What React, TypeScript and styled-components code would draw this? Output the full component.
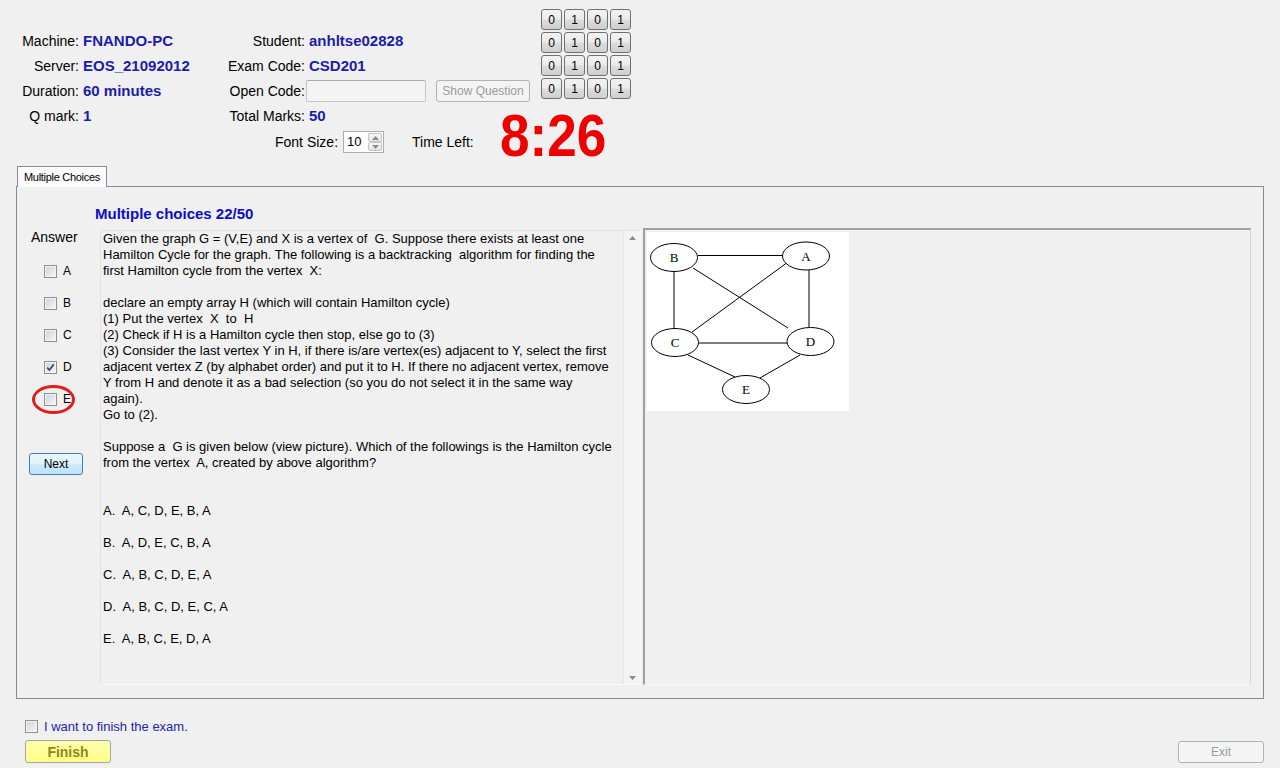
import React from 'react'
import styled, { createGlobalStyle } from 'styled-components'

const GlobalStyle = createGlobalStyle`
  html, body {
    margin: 0;
    padding: 0;
    background: #f0f0f0;
  }
  body {
    font-family: "Liberation Sans", Arial, sans-serif;
    color: #000;
    width: 1280px;
    height: 768px;
    overflow: hidden;
  }
`

const Window = styled.div`
  width: 1280px;
  height: 768px;
  display: flex;
  flex-direction: column;
`

/* ---------- header ---------- */

const Header = styled.div`
  display: flex;
  align-items: flex-start;
  height: 156px;
`

const InfoColumn = styled.div`
  width: 541px;
  flex: none;
  padding-top: 28px;
  box-sizing: border-box;
`

const InfoGrid = styled.div`
  display: grid;
  grid-template-columns: 79px 143px 83px 236px;
  grid-auto-rows: 25px;
  align-items: center;
`

const Label = styled.span`
  font-size: 14px;
  text-align: right;
  white-space: nowrap;
  flex: none;
`

const Value = styled.span`
  font-size: 15px;
  font-weight: bold;
  color: #1c1ca8;
  padding-left: 4px;
  white-space: nowrap;
`

const OpenCodeCell = styled.div`
  display: flex;
  align-items: center;
`

const TextInput = styled.div`
  width: 120px;
  height: 22px;
  margin-left: 1px;
  box-sizing: border-box;
  border: 1px solid #c5c5c5;
  border-top-color: #abadb3;
  background: #f4f4f4;
  border-radius: 2px;
`

const DisabledButton = styled.div<{ $width: number }>`
  width: ${p => p.$width}px;
  height: 22px;
  flex: none;
  box-sizing: border-box;
  border: 1px solid #adb2b5;
  border-radius: 3px;
  background: #f4f4f4;
  color: #9a9a9a;
  font-size: 12px;
  display: flex;
  align-items: center;
  justify-content: center;
`

const FontRow = styled.div`
  display: flex;
  align-items: center;
  height: 28px;
  padding-left: 275px;
  white-space: nowrap;
`

const Spinner = styled.div`
  display: flex;
  flex: none;
  width: 41px;
  height: 22px;
  margin-left: 5px;
  box-sizing: border-box;
  border: 1px solid #abadb3;
  background: #fff;
`

const SpinValue = styled.span`
  flex: 1;
  font-size: 13px;
  line-height: 20px;
  padding-left: 3px;
`

const SpinButtons = styled.div`
  width: 15px;
  display: flex;
  flex-direction: column;
  padding: 1px 1px 1px 0;
  box-sizing: border-box;
`

const SpinButton = styled.span`
  flex: 1;
  border: 1px solid #c4c4c4;
  border-radius: 2px;
  background: linear-gradient(#f7f7f7, #e4e4e4);
  display: flex;
  align-items: center;
  justify-content: center;
`

const TimeLabel = styled.span`
  flex: none;
  font-size: 14px;
  margin-left: 28px;
`

const Timer = styled.span`
  flex: none;
  margin-left: 26px;
  margin-bottom: 12px;
  font-size: 59px;
  line-height: 40px;
  font-weight: bold;
  color: #ee0000;
  transform: scaleX(0.9);
  transform-origin: left center;
`

const BitGrid = styled.div`
  display: grid;
  grid-template-columns: repeat(4, 21px);
  grid-auto-rows: 21px;
  gap: 2px;
  margin-top: 9px;
`

const BitButton = styled.div`
  box-sizing: border-box;
  border: 1px solid #707070;
  border-radius: 3px;
  background: linear-gradient(#f2f2f2 0%, #ebebeb 48%, #dddddd 52%, #cfcfcf 100%);
  font-size: 12px;
  display: flex;
  align-items: center;
  justify-content: center;
`

/* ---------- tab panel ---------- */

const TabArea = styled.div`
  margin: 10px 0 0 16px;
  width: 1248px;
`

const TabStrip = styled.div`
  display: flex;
  height: 20px;
  padding-left: 1px;
`

const Tab = styled.div`
  height: 21px;
  box-sizing: border-box;
  padding: 4px 6px 0;
  border: 1px solid #898c95;
  border-bottom: none;
  background: #fbfbfb;
  font-size: 11px;
  letter-spacing: -0.3px;
  position: relative;
  z-index: 1;
`

const Panel = styled.div`
  height: 513px;
  box-sizing: border-box;
  border: 1px solid #898c95;
  display: grid;
  grid-template-columns: 83px 543px 608px;
  grid-template-rows: 41px 457px;
`

const QuestionTitle = styled.div`
  grid-column: 1 / -1;
  padding: 18px 0 0 78px;
  font-size: 15px;
  line-height: 17px;
  font-weight: bold;
  color: #0c0cc8;
`

const AnswerColumn = styled.div`
  display: flex;
  flex-direction: column;
  align-items: flex-start;
`

const AnswerHeading = styled.div`
  font-size: 14px;
  line-height: 18px;
  margin-left: 14px;
`

const AnswerList = styled.div`
  margin-top: 9px;
  padding-left: 27px;
`

const AnswerRow = styled.div`
  position: relative;
  height: 32px;
  display: flex;
  align-items: center;
`

const CheckLabel = styled.span`
  margin-left: 6px;
  font-size: 12px;
`

const Marker = styled.span`
  position: absolute;
  left: -12px;
  top: 2px;
  width: 43px;
  height: 29px;
  box-sizing: border-box;
  border: 3px solid #e41b1b;
  border-radius: 50%;
`

const CheckBox = styled.span`
  width: 13px;
  height: 13px;
  box-sizing: border-box;
  border: 1px solid #8e8f8f;
  box-shadow: inset 0 0 0 1px #f4f4f4;
  background: linear-gradient(135deg, #cfd1d4, #f7f7f7);
  display: inline-flex;
  align-items: center;
  justify-content: center;
  flex: none;
`

const NextButton = styled.div`
  margin: 38px 0 0 12px;
  width: 54px;
  height: 22px;
  box-sizing: border-box;
  border: 1px solid #3c7fb1;
  border-radius: 3px;
  background: linear-gradient(#edf7fd 0%, #dff2fc 48%, #cdebfc 52%, #bfe2f6 100%);
  font-size: 12px;
  display: flex;
  align-items: center;
  justify-content: center;
`

const TextBox = styled.div`
  margin-top: 2px;
  width: 541px;
  height: 455px;
  box-sizing: border-box;
  border: 1px solid #e3e3e3;
  border-right-color: #f8f8f8;
  border-bottom-color: #fafafa;
  display: flex;
`

const TextBody = styled.div`
  flex: 1;
  padding-left: 2px;
  font-size: 13px;
  line-height: 16px;
  white-space: pre;
  overflow: hidden;
`

const ScrollBar = styled.div`
  width: 17px;
  box-sizing: border-box;
  border-left: 1px solid #e6e6e6;
  background: #f3f3f3;
  display: flex;
  flex-direction: column;
  justify-content: space-between;
  align-items: center;
  padding: 5px 0 4px;
`

const PictureFrame = styled.div`
  height: 457px;
  box-sizing: border-box;
  border-top: 2px solid #a0a0a0;
  border-left: 2px solid #a0a0a0;
  border-right: 1px solid #d6d6d6;
  border-bottom: 1px solid #f8f8f8;
  padding: 2px;
`

/* ---------- footer ---------- */

const Footer = styled.div`
  display: flex;
  justify-content: space-between;
  align-items: flex-end;
  padding: 19px 16px 0 25px;
`

const FinishBlock = styled.div`
  display: flex;
  flex-direction: column;
  align-items: flex-start;
`

const FinishCheckRow = styled.div`
  display: flex;
  align-items: center;
  height: 16px;
`

const FinishText = styled.span`
  margin-left: 6px;
  font-size: 13px;
  color: #2424a8;
`

const FinishButton = styled.div`
  margin-top: 6px;
  width: 86px;
  height: 23px;
  box-sizing: border-box;
  border: 1px solid #a4a4a4;
  border-radius: 3px;
  background: linear-gradient(#ffffb0, #ffff88);
  color: #8a8a10;
  font-size: 14px;
  font-weight: bold;
  display: flex;
  align-items: center;
  justify-content: center;
`

const Arrow = ({ up }: { up?: boolean }) => (
  <svg width="7" height="4" viewBox="0 0 7 4">
    <path d={up ? 'M0 4 L3.5 0 L7 4 Z' : 'M0 0 L3.5 4 L7 0 Z'} fill="#8a8a8a" />
  </svg>
)

const Graph = () => {
  const nodes: [string, number, number][] = [
    ['B', 27, 25.5],
    ['A', 159, 24],
    ['C', 28, 110.5],
    ['D', 163.5, 109.5],
    ['E', 99, 157.5],
  ]
  const edges = [
    [51, 23.5, 136, 23.5],
    [27, 40, 27, 96],
    [162, 38, 162, 95],
    [46, 36, 141, 96],
    [141, 30, 45, 100],
    [52, 111, 140, 111],
    [41, 123, 88, 145],
    [153, 123, 113, 146],
  ]
  return (
    <svg width="202" height="179" viewBox="0 0 202 179" style={{ display: 'block' }}>
      <rect width="202" height="179" fill="#fff" />
      {edges.map(([x1, y1, x2, y2], i) => (
        <line key={i} x1={x1} y1={y1} x2={x2} y2={y2} stroke="#000" strokeWidth="1" />
      ))}
      {nodes.map(([n, x, y]) => (
        <g key={n}>
          <ellipse cx={x} cy={y} rx="23.5" ry="14" fill="#fff" stroke="#000" strokeWidth="1" />
          <text
            x={x}
            y={y + 4.5}
            textAnchor="middle"
            fontSize="13"
            fontFamily='"Liberation Serif", "Times New Roman", serif'
          >
            {n}
          </text>
        </g>
      ))}
    </svg>
  )
}

const questionLines = [
  'Given the graph G = (V,E) and X is a vertex of  G. Suppose there exists at least one',
  'Hamilton Cycle for the graph. The following is a backtracking  algorithm for finding the',
  'first Hamilton cycle from the vertex  X:',
  '',
  'declare an empty array H (which will contain Hamilton cycle)',
  '(1) Put the vertex  X  to  H',
  '(2) Check if H is a Hamilton cycle then stop, else go to (3)',
  '(3) Consider the last vertex Y in H, if there is/are vertex(es) adjacent to Y, select the first',
  'adjacent vertex Z (by alphabet order) and put it to H. If there no adjacent vertex, remove',
  'Y from H and denote it as a bad selection (so you do not select it in the same way',
  'again).',
  'Go to (2).',
  '',
  'Suppose a  G is given below (view picture). Which of the followings is the Hamilton cycle',
  'from the vertex  A, created by above algorithm?',
  '',
  '',
  'A.  A, C, D, E, B, A',
  '',
  'B.  A, D, E, C, B, A',
  '',
  'C.  A, B, C, D, E, A',
  '',
  'D.  A, B, C, D, E, C, A',
  '',
  'E.  A, B, C, E, D, A',
]

const info: [string, string, string, string][] = [
  ['Machine:', 'FNANDO-PC', 'Student:', 'anhltse02828'],
  ['Server:', 'EOS_21092012', 'Exam Code:', 'CSD201'],
  ['Duration:', '60 minutes', 'Open Code:', ''],
  ['Q mark:', '1', 'Total Marks:', '50'],
]

const options = ['A', 'B', 'C', 'D', 'E']
const checked = 'D'

export default function App() {
  return (
    <Window>
      <GlobalStyle />
      <Header>
        <InfoColumn>
          <InfoGrid>
            {info.map(([l1, v1, l2, v2], i) => (
              <React.Fragment key={l1}>
                <Label>{l1}</Label>
                <Value>{v1}</Value>
                <Label>{l2}</Label>
                {i === 2 ? (
                  <OpenCodeCell>
                    <TextInput />
                    <DisabledButton $width={94} style={{ marginLeft: 10 }}>
                      Show Question
                    </DisabledButton>
                  </OpenCodeCell>
                ) : (
                  <Value>{v2}</Value>
                )}
              </React.Fragment>
            ))}
          </InfoGrid>
          <FontRow>
            <Label>Font Size:</Label>
            <Spinner>
              <SpinValue>10</SpinValue>
              <SpinButtons>
                <SpinButton>
                  <Arrow up />
                </SpinButton>
                <SpinButton>
                  <Arrow />
                </SpinButton>
              </SpinButtons>
            </Spinner>
            <TimeLabel>Time Left:</TimeLabel>
            <Timer>8:26</Timer>
          </FontRow>
        </InfoColumn>
        <BitGrid>
          {Array.from({ length: 16 }).map((_, i) => (
            <BitButton key={i}>{i % 2}</BitButton>
          ))}
        </BitGrid>
      </Header>

      <TabArea>
        <TabStrip>
          <Tab>Multiple Choices</Tab>
        </TabStrip>
        <Panel>
          <QuestionTitle>Multiple choices 22/50</QuestionTitle>
          <AnswerColumn>
            <AnswerHeading>Answer</AnswerHeading>
            <AnswerList>
              {options.map(o => (
                <AnswerRow key={o}>
                  <CheckBox>
                    {o === checked && (
                      <svg width="9" height="9" viewBox="0 0 9 9">
                        <path d="M1.2 4.6 L3.4 7 L7.8 1.4" fill="none" stroke="#36477a" strokeWidth="1.7" />
                      </svg>
                    )}
                  </CheckBox>
                  <CheckLabel>{o}</CheckLabel>
                  {o === 'E' && <Marker />}
                </AnswerRow>
              ))}
            </AnswerList>
            <NextButton>Next</NextButton>
          </AnswerColumn>
          <TextBox>
            <TextBody>{questionLines.join('\n')}</TextBody>
            <ScrollBar>
              <Arrow up />
              <Arrow />
            </ScrollBar>
          </TextBox>
          <PictureFrame>
            <Graph />
          </PictureFrame>
        </Panel>
      </TabArea>

      <Footer>
        <FinishBlock>
          <FinishCheckRow>
            <CheckBox />
            <FinishText>I want to finish the exam.</FinishText>
          </FinishCheckRow>
          <FinishButton>Finish</FinishButton>
        </FinishBlock>
        <DisabledButton $width={86}>Exit</DisabledButton>
      </Footer>
    </Window>
  )
}
